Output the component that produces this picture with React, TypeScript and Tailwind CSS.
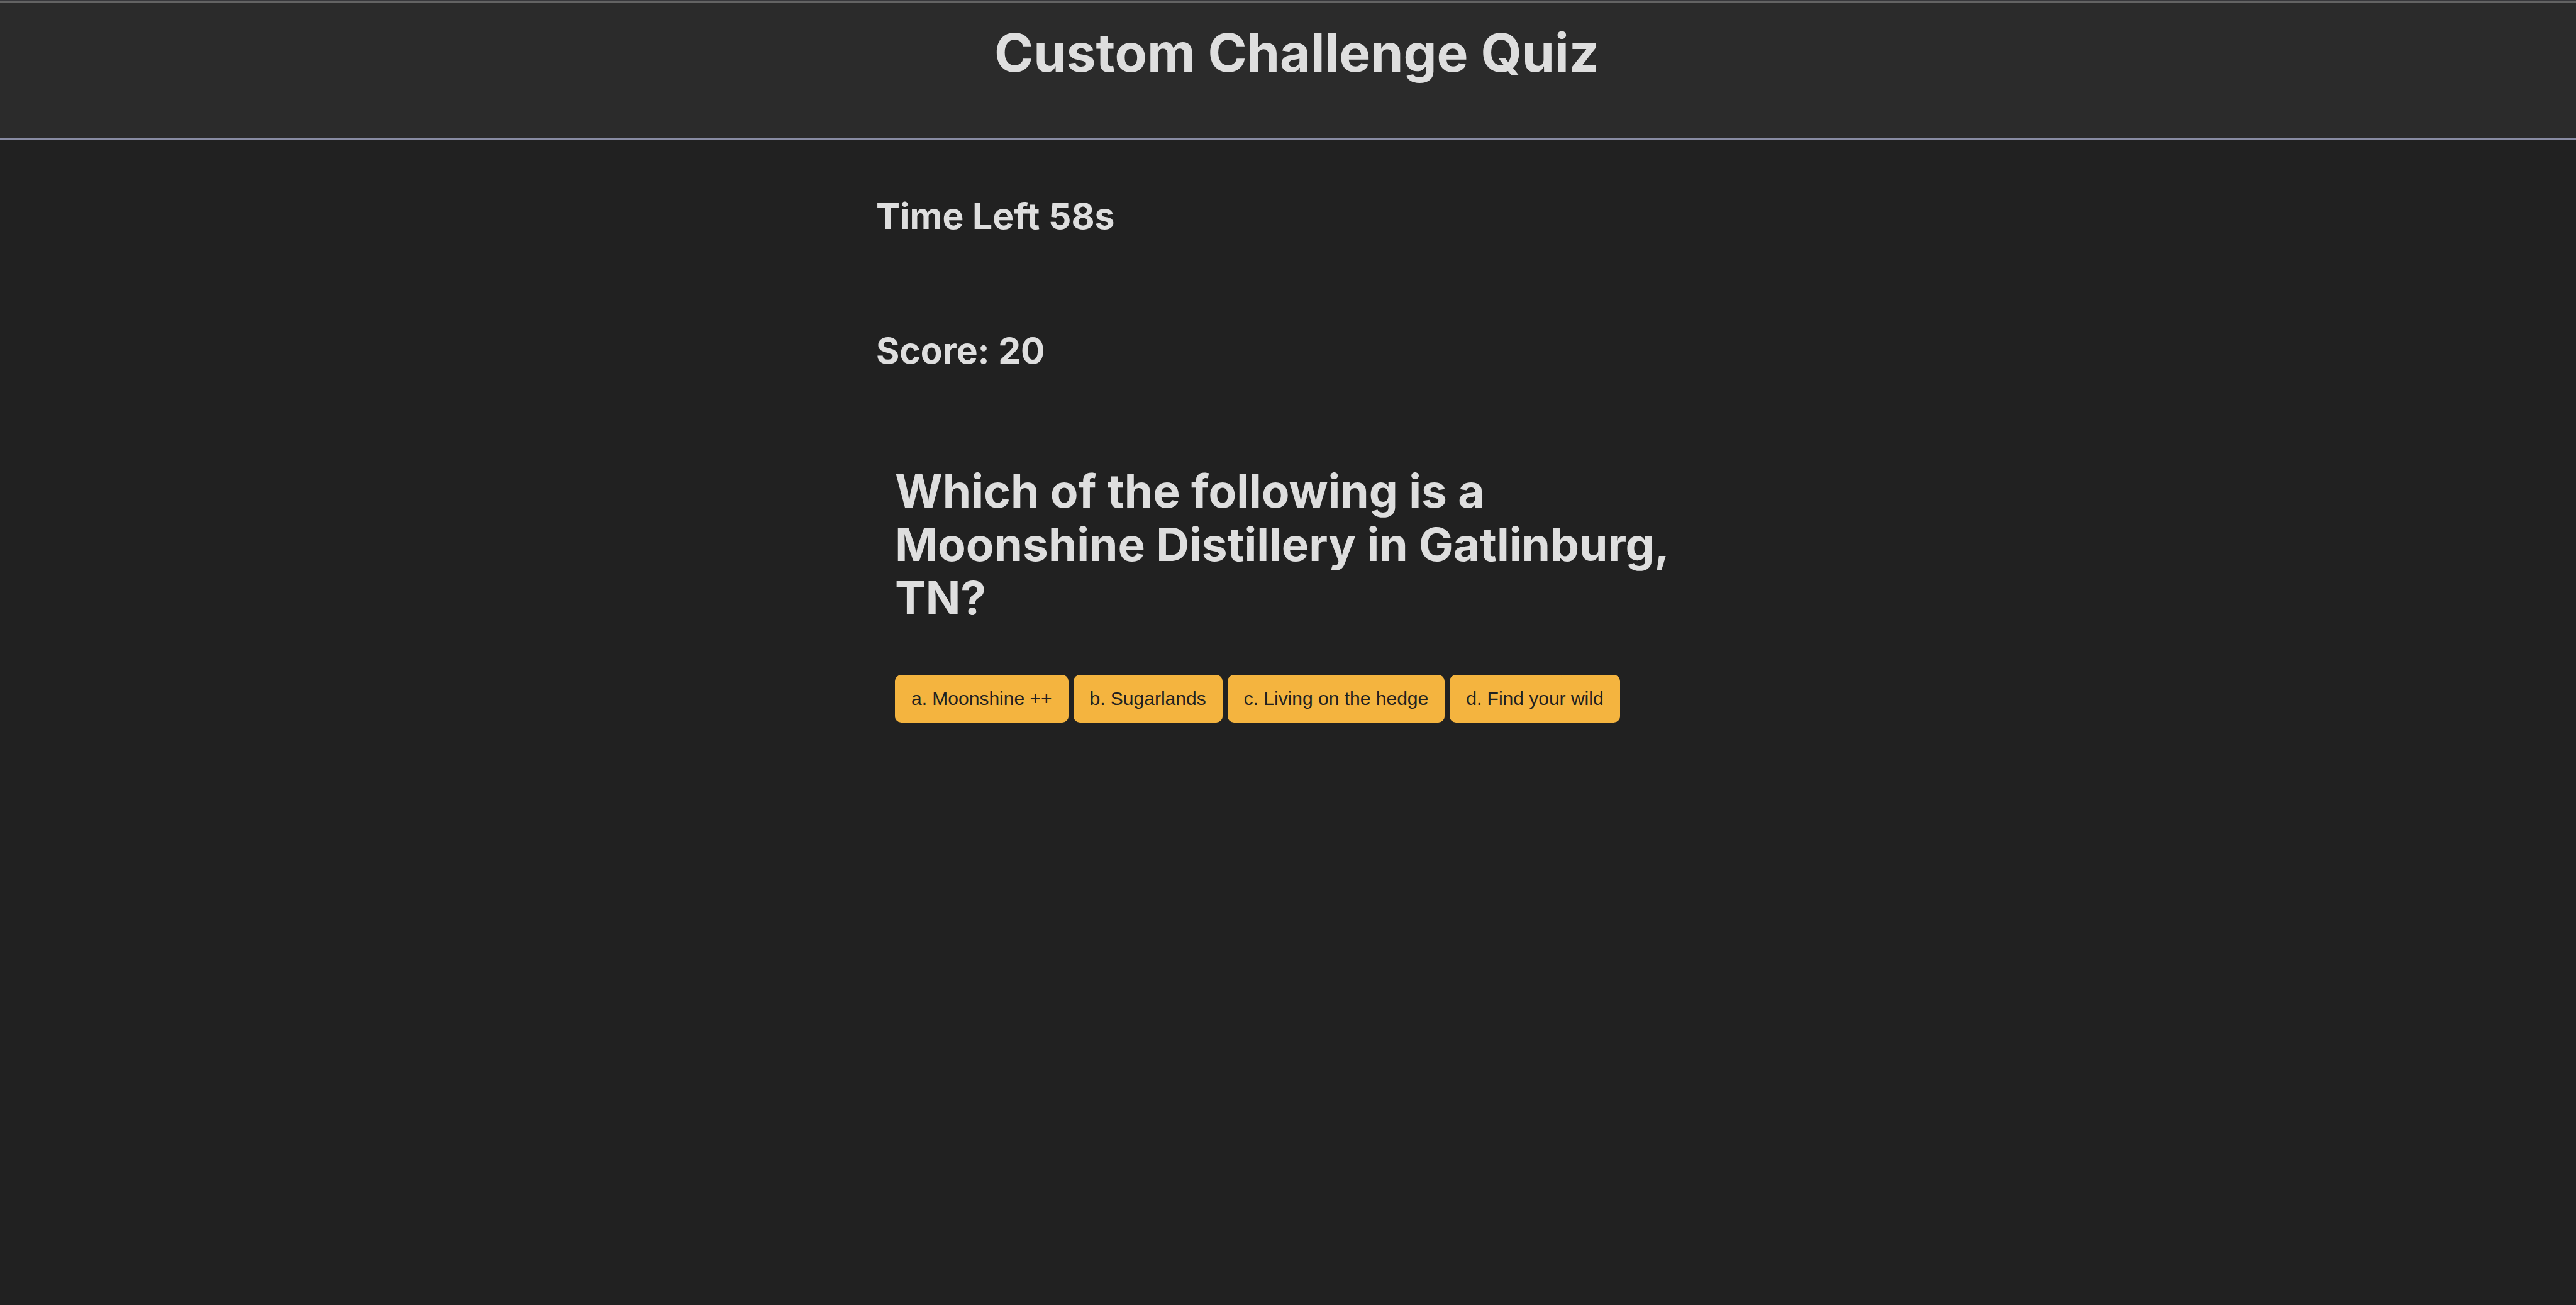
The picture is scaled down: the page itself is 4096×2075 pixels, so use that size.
const answers = ["a. Moonshine ++", "b. Sugarlands", "c. Living on the hedge", "d. Find your wild"];

export default function App() {
  return (
    <div className="min-h-screen bg-[#212121] font-['Inter',sans-serif] font-bold text-[#dedede]">
      <header className="border-t-2 border-[#38383c]">
        <div className="border-t-2 border-b-2 border-t-[#636363] border-b-[#888ba3] bg-[#2b2b2b] pt-6 pb-20 pl-7 text-center">
          <h1 className="text-[84px] leading-[112px]">Custom Challenge Quiz</h1>
        </div>
      </header>
      <main className="mx-auto w-[1310px] pt-[86px]">
        <h2 className="text-[57px] leading-[72px]">Time Left 58s</h2>
        <h2 className="mt-[142px] text-[57px] leading-[72px]">Score: 20</h2>
        <section className="mt-[144px] px-[30px]">
          <h2 className="text-[73px] leading-[85px]">Which of the following is a Moonshine Distillery in Gatlinburg, TN?</h2>
          <div className="mt-20 flex gap-2 font-['Liberation_Sans',sans-serif] font-normal">
            {answers.map((a) => (
              <button key={a} type="button" className="shrink-0 rounded-[10px] bg-[#f4b43f] px-[26px] text-[30px] leading-[76px] whitespace-nowrap text-[#212121]">
                {a}
              </button>
            ))}
          </div>
        </section>
      </main>
    </div>
  );
}
